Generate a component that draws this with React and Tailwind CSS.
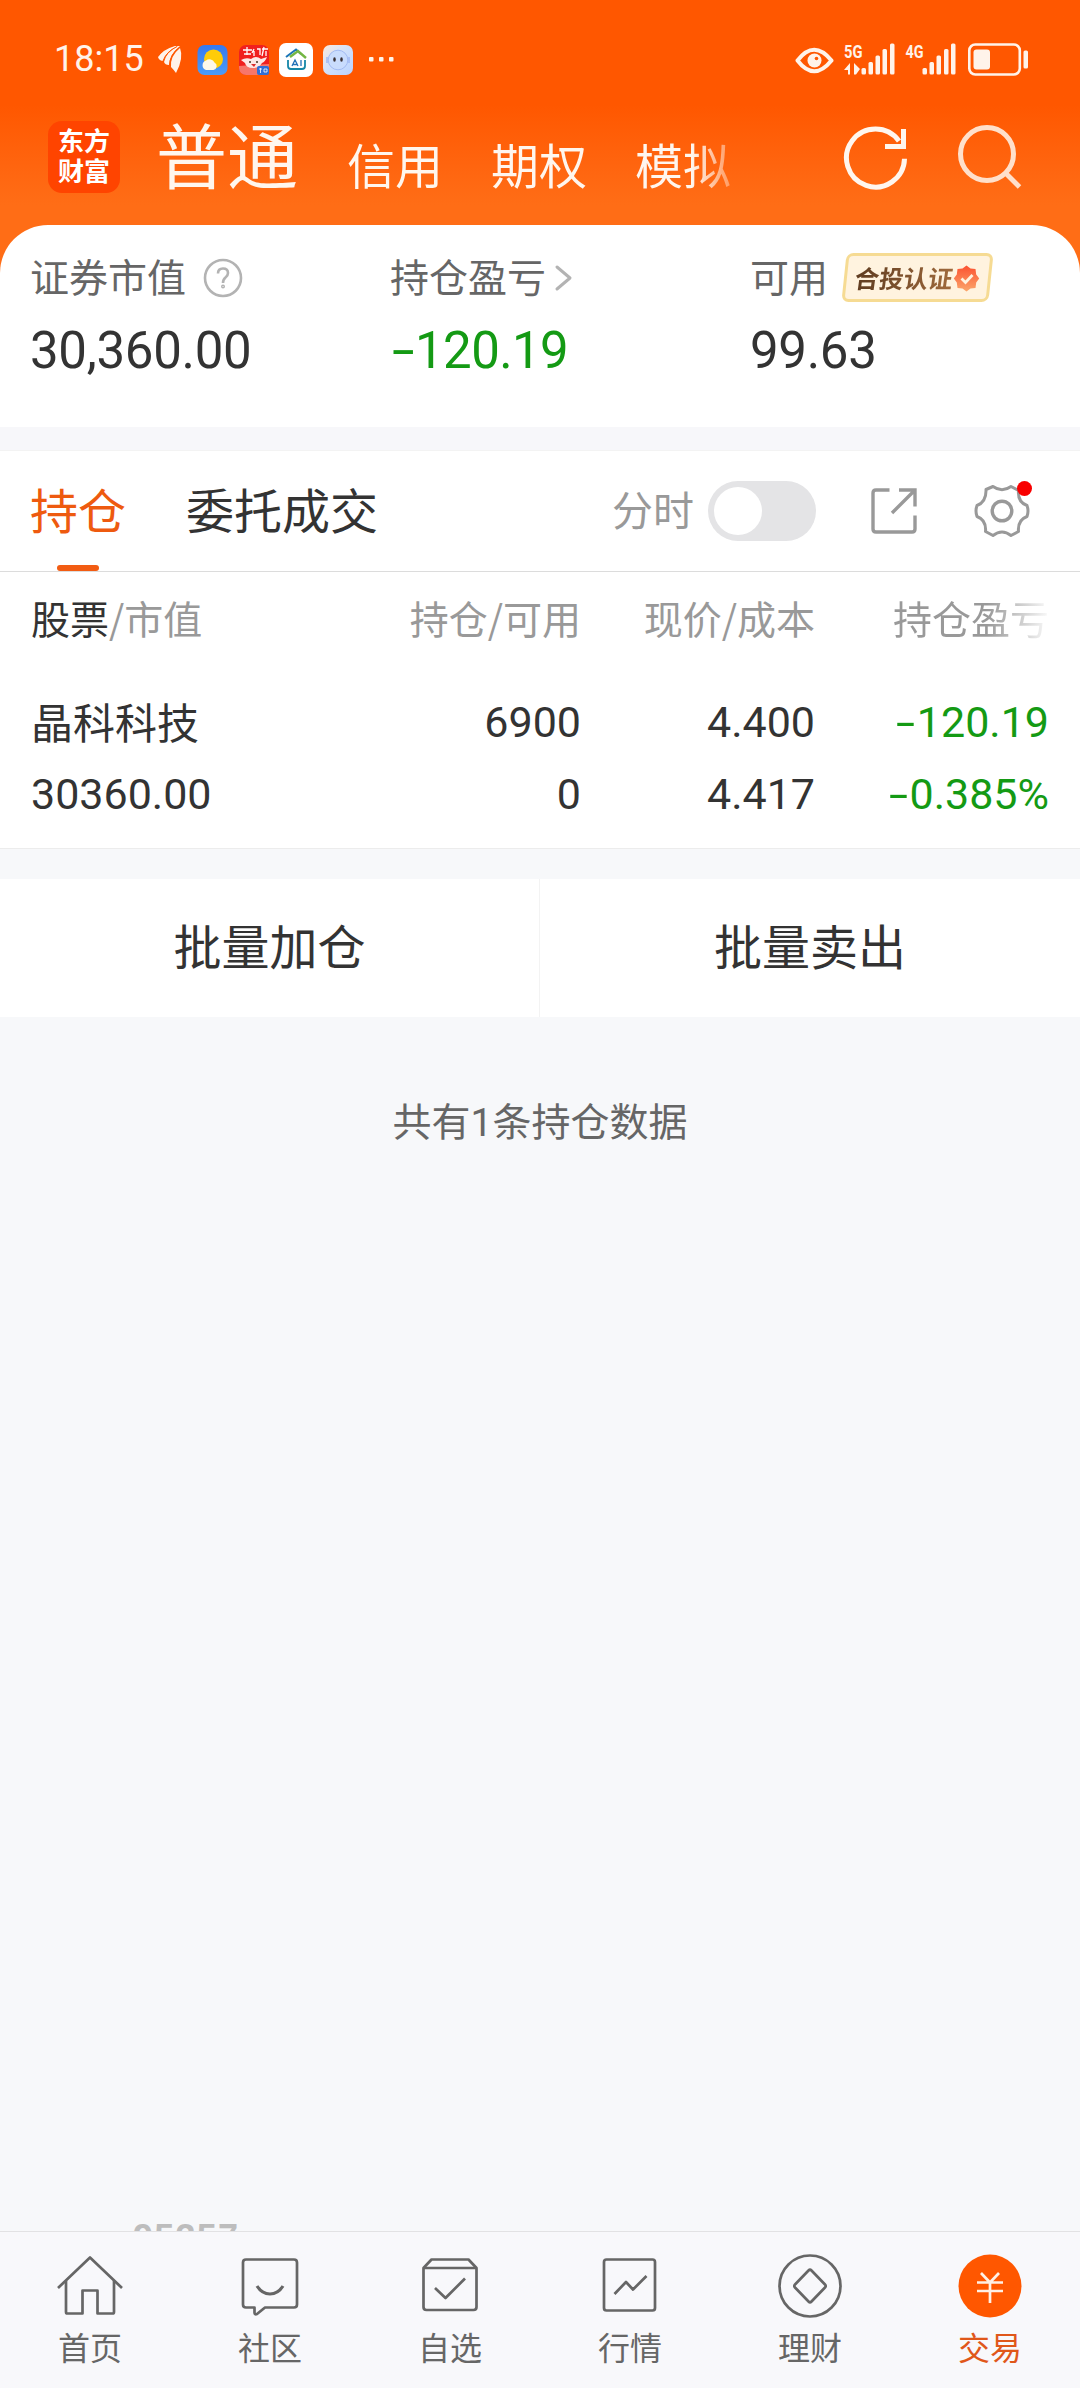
const cjk = 'font-["Noto_Sans_CJK_SC",sans-serif]'
const num = 'font-[Roboto,"Noto_Sans_CJK_SC",sans-serif]'

function Minus({ className }) {
    return <span className={`inline-block origin-left scale-x-[1.6] text-left ${className}`}>-</span>;
}

function StatusBar() {
    return (
        <div className="flex h-[118px] items-start pt-[40px] pl-[54px] pr-[51px] text-[#fff3ea]">
            <span className={`w-[104px] text-[36px] leading-[39px] ${num}`}>18:15</span>

            <svg className="h-[38px] w-[240px]" viewBox="158 40 240 38">
                <defs>
                    <linearGradient id="sky" x1="0" y1="0" x2="0" y2="1">
                        <stop offset="0" stopColor="#3579f0" />
                        <stop offset="1" stopColor="#4b9cf8" />
                    </linearGradient>
                    <linearGradient id="face" x1="0" y1="0" x2="1" y2="1">
                        <stop offset="0" stopColor="#fbe9de" />
                        <stop offset="0.5" stopColor="#cfe0fb" />
                        <stop offset="1" stopColor="#b9d2ff" />
                    </linearGradient>
                </defs>
                <g fill="#fff3ea">
                    <path d="M158 57 Q161 52 176 46 Q165 52 162 60 Q159 60 158 57Z" />
                    <path d="M164 62 Q166 52 178 46 L180 46 Q170 54 169 65 Q165 65 164 62Z" />
                    <path d="M171 67 Q170 56 180 48 Q184 58 176 73 Q174 70 171 67Z" />
                    <path d="M158.500 58 Q161 50 175 46 L178 46 Q166 51 163 61 Q160 61 158.500 58Z" />
                </g>
                <path d="M169.500 66 Q169.500 54 180 47 M163 61 Q166 52 177 46.500" stroke="#ff5700" strokeWidth="1" fill="none" />

                <rect x="197.500" y="45" width="30" height="30" rx="7" fill="url(#sky)" />
                <circle cx="213.500" cy="59" r="9.500" fill="#ffcc08" />
                <path d="M206 70 a5 5 0 0 1 0 -9.500 a5.500 5.500 0 0 1 8.500 2 a4 4 0 0 1 -1 7.500Z" fill="#fdf8ea" />

                <rect x="239" y="45" width="30" height="30" rx="7" fill="#f0201f" />
                <path d="M239 66 L269 64 V68 A7 7 0 0 1 262 75 H246 A7 7 0 0 1 239 68Z" fill="#f7766a" />
                <path d="M243 50h9M247 47v8M244 54h7M254 49l-2 4M254 51v5M257 49h3v6M262 49h6M264 47l-2 9M266 51v5" stroke="#fff" strokeWidth="1.300" fill="none" />
                <path d="M241 60 Q246 57 251 59 Q256 55 261 59 L267 57 Q265 62 262 63 Q259 68 253 68 Q246 68 245 63Z" fill="#fde9e6" />
                <circle cx="250" cy="62" r="1" fill="#432" />
                <circle cx="257" cy="62" r="1" fill="#432" />
                <path d="M251 64h5l-2 3z" fill="#d92b2b" />
                <rect x="257" y="66" width="12" height="9" rx="2" fill="#2f6fd6" />
                <path d="M259 69h3M260.500 68v5M264 69h3v3h-3z" stroke="#fff" strokeWidth="0.800" fill="none" />

                <rect x="279" y="43" width="34" height="34" rx="7" fill="#fff" />
                <path d="M286 57 L296 49.500 L301 54" stroke="#1b75b8" strokeWidth="2" fill="none" />
                <path d="M290 57 L298 51 L306 58" stroke="#73b643" strokeWidth="2.400" fill="none" />
                <path d="M288 60 V66 Q288 69 291 69 H302 Q305 69 305 66 V60" stroke="#1687a8" strokeWidth="1.800" fill="none" />
                <path d="M292 66 L295 60 L298 66 M293 64.500h4 M301 60v6" stroke="#2372b8" strokeWidth="1.300" fill="none" />

                <rect x="323" y="45" width="30" height="30" rx="7" fill="url(#face)" />
                <circle cx="338" cy="60" r="9.800" fill="#c9dcfd" stroke="#a3bbf3" strokeWidth="1" />
                <path d="M327 57v6M349 57v6" stroke="#a3bbf3" strokeWidth="1.600" />
                <ellipse cx="334.500" cy="59.500" rx="1.300" ry="2.200" fill="#3b3236" />
                <ellipse cx="341.500" cy="59.500" rx="1.300" ry="2.200" fill="#3b3236" />

                <g fill="#fff3ea">
                    <rect x="369" y="57" width="4.500" height="4.500" rx="1" />
                    <rect x="379" y="57" width="4.500" height="4.500" rx="1" />
                    <rect x="389" y="57" width="4.500" height="4.500" rx="1" />
                </g>
            </svg>

            <svg className="ml-auto h-[38px] w-[234px]" viewBox="795 40 234 38" fill="currentColor">
                <path d="M797.500 60.500 Q814 39 831.500 60.500 Q814 82 797.500 60.500Z" fill="none" stroke="currentColor" strokeWidth="4" strokeLinejoin="round" />
                <circle cx="814.500" cy="60.500" r="7" />
                <circle cx="816.500" cy="58.500" r="1.800" fill="#ff5700" />
                <text x="844" y="57.500" fontSize="19" fontWeight="700" textLength="18.500" lengthAdjust="spacingAndGlyphs" className={num}>5G</text>
                <path d="M844 70 L850 63 V74.500 H848 V70Z M854 63 L860 69 L856 74.500 H854Z" />
                <rect x="861.500" y="68" width="4.500" height="6.500" rx="1.500" />
                <rect x="868.500" y="62" width="4.500" height="12.500" rx="1.500" />
                <rect x="875.500" y="55.500" width="4.500" height="19" rx="1.500" />
                <rect x="882.500" y="49" width="4.500" height="25.500" rx="1.500" />
                <rect x="890" y="43.500" width="4.500" height="31" rx="1.500" />
                <text x="905.500" y="57.500" fontSize="19" fontWeight="700" textLength="18" lengthAdjust="spacingAndGlyphs" className={num}>4G</text>
                <rect x="922.500" y="68" width="4.500" height="6.500" rx="1.500" />
                <rect x="929.500" y="62" width="4.500" height="12.500" rx="1.500" />
                <rect x="936.500" y="55.500" width="4.500" height="19" rx="1.500" />
                <rect x="944" y="49" width="4.500" height="25.500" rx="1.500" />
                <rect x="951" y="43.500" width="4.500" height="31" rx="1.500" />
                <rect x="969.300" y="44.500" width="50.500" height="30" rx="6" fill="none" stroke="currentColor" strokeWidth="2.600" />
                <rect x="973.500" y="49.500" width="16.500" height="20" rx="3" />
                <rect x="1023.500" y="50.500" width="4.500" height="18" rx="1.500" />
            </svg>
        </div>
    );
}

function Header() {
    return (
        <div className="flex h-[107px] items-start pl-[48px] pr-[56px] text-[#fff6ee]">
            <div className={`mt-[3px] h-[72px] w-[72px] rounded-[14px] bg-[#ff4400] pt-[4px] text-center text-[26px] font-bold leading-[30px] text-white ${cjk}`}>
                <div>东方</div>
                <div>财富</div>
            </div>
            <div className="ml-[36px] text-[71px] leading-[69px]">普通</div>
            <div className="mt-[14px] ml-[49px] flex gap-[48px] bg-linear-to-r from-[#fff6ee] from-[345px] to-[#fff6ee40] to-[390px] bg-clip-text text-[48px] leading-[63px] text-transparent">
                <span>信用</span>
                <span>期权</span>
                <span>模拟</span>
            </div>
            <svg className="mt-[4px] ml-auto h-[72px] w-[182px]" viewBox="842 122 182 72" fill="none" strokeWidth="5">
                <path d="M904.500 158.800 A29 29 0 1 1 899 141" stroke="#fff6ee" />
                <path d="M903.500 129 V146.500 H885" stroke="#fff6ee" />
                <circle cx="987" cy="154" r="26.500" stroke="#ffe0cb" />
                <path d="M1006 173.500 L1019.500 187" stroke="#ffe0cb" />
            </svg>
        </div>
    );
}

function Summary() {
    return (
        <div className="grid h-[202px] grid-cols-[360px_360px_1fr] rounded-t-[48px] bg-white pt-[25px] pl-[30px] text-[39px] text-[#666]">
            <div>
                <div className="flex h-[50px] items-center leading-[50px]">
                    证券市值
                    <svg className="mt-[5px] ml-[17px] size-[40px]" viewBox="0 0 40 40" fill="none" stroke="#b3b3b3" strokeWidth="2.600">
                        <circle cx="20" cy="20" r="18" />
                        <path d="M15 15.500 Q15 10.500 20 10.500 Q25 10.500 25 15 Q25 17.500 22.500 19.500 Q20 21.500 20 25" />
                        <circle cx="20" cy="28.500" r="0.700" />
                    </svg>
                </div>
                <div className={`mt-[21px] text-[51px] leading-[60px] tracking-[-0.300px] text-[#333] ${num}`}>30,360.00</div>
            </div>
            <div>
                <div className="flex h-[50px] items-center leading-[50px]">
                    持仓盈亏
                    <svg className="mt-[5px] ml-[8px] h-[28px] w-[20px]" viewBox="0 0 20 28" fill="none" stroke="#b3b3b3" strokeWidth="3" strokeLinecap="round" strokeLinejoin="round">
                        <path d="M3 3 L16 14 L3 25" />
                    </svg>
                </div>
                <div className={`mt-[21px] pl-[2px] text-[51px] leading-[60px] tracking-[-0.600px] text-[#149a14] ${num}`}>
                    <Minus className="w-[23px]" />120.19
                </div>
            </div>
            <div>
                <div className="flex h-[50px] items-center leading-[50px]">
                    可用
                    <div className="relative mt-[5px] ml-[16px] h-[49px] w-[149px]">
                        <div className="h-full w-[147px] -skew-x-6 rounded-[7px] border-[3px] border-[#f6db93] bg-[#fff3df]" />
                        <div className="absolute inset-0 flex items-center pl-[11px]">
                            <span className="-skew-x-8 bg-linear-to-r from-[#5f3c20] to-[#a06a3c] bg-clip-text text-[24.500px] font-bold leading-[40px] text-transparent">合投认证</span>
                            <svg className="mt-px size-[27px]" viewBox="-13.500 -13.500 27 27">
                                <defs>
                                    <linearGradient id="seal" x1="0" y1="0" x2="0" y2="1">
                                        <stop offset="0" stopColor="#fb5130" />
                                        <stop offset="1" stopColor="#fba76c" />
                                    </linearGradient>
                                </defs>
                                <path d="M0 -13 L4 -10 L9 -9.500 L9.700 -4 L12.700 0 L9.700 4 L9 9.500 L4 10 L0 13 L-4 10 L-9 9.500 L-9.700 4 L-12.700 0 L-9.700 -4 L-9 -9.500 L-4 -10Z" fill="url(#seal)" />
                                <path d="M-5 0 L-1 4 L6 -3.500" fill="none" stroke="#fff3df" strokeWidth="2.800" />
                            </svg>
                        </div>
                    </div>
                </div>
                <div className={`mt-[21px] text-[51px] leading-[60px] tracking-[-0.300px] text-[#333] ${num}`}>99.63</div>
            </div>
        </div>
    );
}

function Tabs() {
    return (
        <div className="flex h-[122px] border-t border-b border-t-[#f3f3f3] border-b-[#dcdcdc] bg-white pl-[30px] pr-[48px] text-[48px] leading-[115px]">
            <div className="flex w-[96px] flex-col items-center text-[#ee5a0f]">
                <span className="h-[114px]">持仓</span>
                <span className="h-[6px] w-[42px] rounded-full bg-[#f25c13]" />
            </div>
            <div className="ml-[60px] text-[#333]">委托成交</div>
            <div className="ml-auto text-[41px] text-[#999]">分时</div>
            <div className="mt-[30px] ml-[14px] h-[60px] w-[108px] rounded-full bg-[#e4e4e6] p-[6px]">
                <div className="size-[48px] rounded-full bg-white" />
            </div>
            <svg className="mt-[30px] ml-[52px] h-[60px] w-[164px]" viewBox="868 481 164 60" fill="none" stroke="#999" strokeWidth="3.400">
                <path d="M889.500 490 H876 Q873 490 873 493 V529 Q873 532 876 532 H912 Q915 532 915 529 V515.500" />
                <path d="M899 490 H915 V506.500 M914 491 L892 513" />
                <circle cx="1002" cy="511" r="9.800" />
                <path strokeWidth="3" strokeLinejoin="round" d="M986 489.500 L993 486.500 Q1002 493 1011 486.500 L1018.500 490.500 Q1017.500 502 1027 505.500 Q1029 511 1027 516.500 Q1017.500 520 1018.500 531.500 L1011 535.500 Q1002 528.500 993 535.500 L985.500 531.500 Q986.500 520 977 516.500 Q975 511 977 505.500 Q986.500 502 986 489.500Z" />
                <circle cx="1024.500" cy="488.500" r="7.500" fill="#f80000" stroke="none" />
            </svg>
        </div>
    );
}

function Holdings() {
    return (
        <div className="h-[277px] border-b border-[#ececec] bg-white pt-[17px] text-[#333]">
            <div className="grid h-[56px] grid-cols-[350px_200px_234px_234px] pl-[31px] text-right text-[39px] leading-[56px] text-[#999]">
                <div className="text-left"><span className="text-[#333]">股票</span>/市值</div>
                <div>持仓/可用</div>
                <div>现价/成本</div>
                <div className="w-[156px] justify-self-end bg-linear-to-r from-[#999] from-60% to-[#fafafa] bg-clip-text whitespace-nowrap text-transparent">
                    持仓盈亏
                </div>
            </div>
            <div className={`mt-[41px] grid grid-cols-[350px_200px_234px_234px] pl-[31px] text-right text-[43px] leading-[72px] ${num}`}>
                <div className={`-mt-px text-left text-[42px] ${cjk}`}>晶科科技</div>
                <div>6900</div>
                <div>4.400</div>
                <div className="text-[#149a14]"><Minus className="w-[21px]" />120.19</div>
                <div className="text-left">30360.00</div>
                <div>0</div>
                <div>4.417</div>
                <div className="text-[#149a14]"><Minus className="w-[21px]" />0.385%</div>
            </div>
        </div>
    );
}

function NavItem({ label, active, children }) {
    return (
        <div className={`flex flex-1 flex-col items-center ${active ? "text-[#e0571a]" : "text-[#666]"}`}>
            <svg className="mt-[20px] size-[68px]" viewBox="-34 -34 68 68" fill="none" stroke="currentColor" strokeWidth="2.700" strokeLinejoin="round">
                {children}
            </svg>
            <span className="text-[32px] leading-[53px]">{label}</span>
        </div>
    );
}

function BottomNav() {
    return (
        <div className="flex h-[157px] border-t border-[#e2e2e4] bg-[#f8f8fb]">
            <NavItem label="首页">
                <path d="M-32 2 L0 -28.500 L32 2" />
                <path d="M-24 -5 V26 Q-24 27.500 -22.500 27.500 H-7.500 V4.500 H7.500 V27.500 H22.500 Q24 27.500 24 26 V-5" />
            </NavItem>
            <NavItem label="社区">
                <path d="M-24 -26.500 H24 Q27 -26.500 27 -23.500 V18.500 Q27 21.500 24 21.500 H-5 L-13 28 Q-15.500 29 -15.500 26.500 V21.500 H-24 Q-27 21.500 -27 18.500 V-23.500 Q-27 -26.500 -24 -26.500Z" />
                <path d="M-13 0 Q-8 8 0 8 Q8 8 13 0" strokeWidth="3.200" />
            </NavItem>
            <NavItem label="自选">
                <path d="M-26.500 -18 L-18.500 -26.500 H18.500 L26.500 -18 V21 Q26.500 24 23.500 24 H-23.500 Q-26.500 24 -26.500 21Z" />
                <path d="M-26 -18 H26" />
                <path d="M-15 2 L-4.500 12 L15 -7.500" />
            </NavItem>
            <NavItem label="行情">
                <rect x="-26" y="-26.500" width="51" height="51" rx="2.500" />
                <path d="M-15.500 8 L-4 -4 L3 3.500 L16.500 -10" />
            </NavItem>
            <NavItem label="理财">
                <circle r="30.500" />
                <path d="M-1.500 -15.500 Q0 -17 1.500 -15.500 L15 -1.500 Q16.500 0 15 1.500 L1.500 15.500 Q0 17 -1.500 15.500 L-15 1.500 Q-16.500 0 -15 -1.500Z" />
            </NavItem>
            <NavItem label="交易" active>
                <circle r="31.500" fill="#ff5700" stroke="none" />
                <path d="M-9 -13 L0 -3.500 L9 -13 M0 -3.500 V17 M-13 -3.500 H13 M-13 5 H13" stroke="#fff0e4" strokeLinejoin="miter" />
            </NavItem>
        </div>
    );
}

function App() {
    return (
        <div className={`flex h-[2388px] w-[1080px] flex-col overflow-hidden bg-[#f7f8fa] ${cjk}`}>
            <div className="bg-linear-to-b from-[#ff5700] from-[105px] to-[#ff6d16] to-[205px]">
                <StatusBar />
                <Header />
                <Summary />
            </div>

            <div className="h-[23px] bg-[#f7f7fa]" />
            <Tabs />
            <Holdings />

            <div className="mt-[30px] grid h-[138px] grid-cols-2 bg-white text-center text-[48px] leading-[131px] text-[#333]">
                <div className="border-r border-[#f3f3f3]">批量加仓</div>
                <div>批量卖出</div>
            </div>

            <div className="mt-[76px] text-center text-[39px] leading-[53px] text-[#666]">
                共有<span className={num}>1</span>条持仓数据
            </div>

            {/* hotline number, mostly hidden under the bottom nav */}
            <div className='mt-auto h-[7px] overflow-hidden pl-[133px] font-["Liberation_Sans",sans-serif] text-[36px] font-bold leading-[34px] tracking-[1.200px] text-[#bdbdbd]'>
                <div className="-mt-[3px]">95357</div>
            </div>
            <BottomNav />
        </div>
    );
}

export default App;
